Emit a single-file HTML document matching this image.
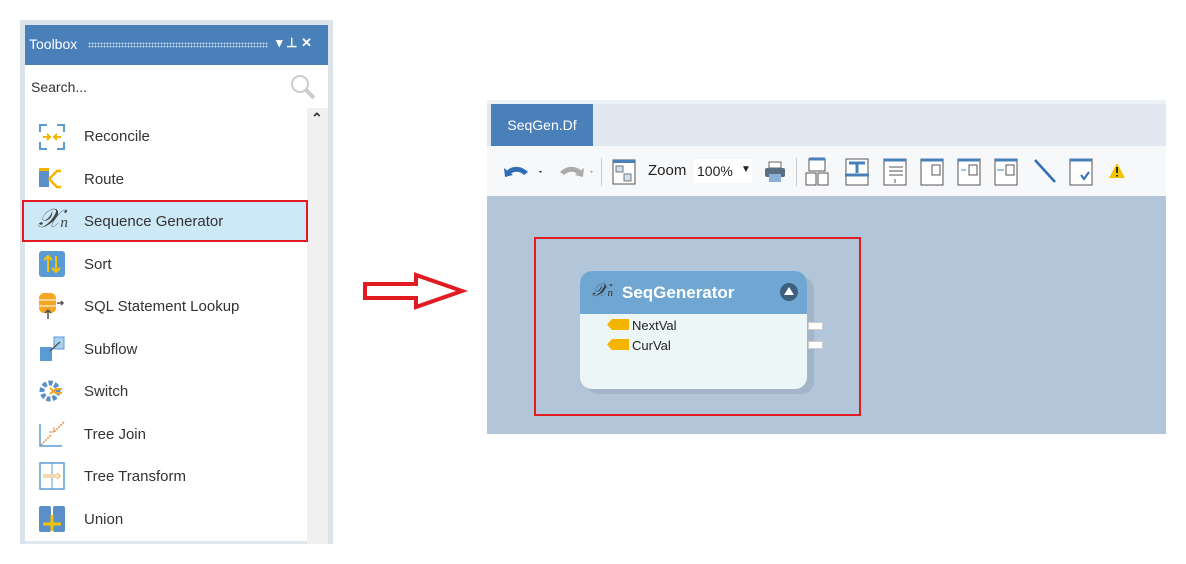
<!DOCTYPE html>
<html><head><meta charset="utf-8"><style>
body{margin:0;width:1186px;height:564px;background:#fff;position:relative;font-family:"Liberation Sans",sans-serif;overflow:hidden}
.a{position:absolute}
.item{position:absolute;left:84px;font-size:15px;color:#333}
.ic{position:absolute;left:38px;width:28px;height:28px}
</style></head><body>
<!-- toolbox -->
<div class="a" style="left:20px;top:20px;width:313px;height:524px;background:#dde3ea"></div>
<div class="a" style="left:25px;top:25px;width:303px;height:40px;background:#4a80ba"></div>
<div class="a" style="left:29px;top:36px;color:#fff;font-size:14px">Toolbox</div>
<div class="a" style="left:88px;top:42px;width:180px;height:6px;background-image:radial-gradient(#c5d6ea 0.8px,transparent 1px);background-size:3px 3px"></div>
<div class="a" style="left:276px;top:35px;color:#fff;font-size:13px;font-weight:bold">▾ ⊥ ✕</div>
<div class="a" style="left:25px;top:65px;width:303px;height:479px;background:#fff"></div>
<div class="a" style="left:31px;top:79px;font-size:14px;color:#333">Search...</div>
<svg class="a" style="left:288px;top:72px" width="30" height="30"><circle cx="12" cy="12" r="8" fill="none" stroke="#ccc" stroke-width="2"/><line x1="18" y1="18" x2="26" y2="26" stroke="#ccc" stroke-width="4"/></svg>
<div class="a" style="left:307px;top:108px;width:21px;height:436px;background:#f0f0f0"></div>
<div class="a" style="left:311px;top:110px;font-size:14px;color:#333;font-weight:bold">⌃</div>
<div class="a" style="left:22px;top:200px;width:282px;height:38px;background:#cde8f7;border:2px solid #e21b23"></div>
<div class="a" style="left:25px;top:541px;width:282px;height:3px;background:#dde8f1"></div>

<svg class="ic" style="top:123px" viewBox="0 0 28 28"><path d="M2 9V2h7M19 2h7v7M26 19v7h-7M9 26H2v-7" fill="none" stroke="#5b9bd5" stroke-width="2"/><path d="M5 14h7m-3-3l3 3-3 3M23 14h-7m3-3l-3 3 3 3" fill="none" stroke="#f5b400" stroke-width="2"/></svg>
<div class="item" style="top:128px">Reconcile</div>
<svg class="ic" style="top:165px" viewBox="0 0 28 28"><rect x="1" y="6" width="10" height="16" fill="#5b8fc9"/><rect x="1" y="3" width="10" height="3" fill="#f5b400"/><path d="M11 14l8-8h4M11 14l8 8h4" fill="none" stroke="#f5b400" stroke-width="2.5"/></svg>
<div class="item" style="top:171px">Route</div>
<div class="a" style="left:38px;top:204px;font-family:'Liberation Serif',serif;font-style:italic;font-size:26px;color:#444">𝒳<span style="font-size:15px">n</span></div>
<div class="item" style="top:213px">Sequence Generator</div>
<svg class="ic" style="top:250px" viewBox="0 0 28 28"><rect x="1" y="1" width="26" height="26" rx="3" fill="#5b9bd5"/><path d="M10 22V6m-4 4l4-4 4 4M18 6v16m-4-4l4 4 4-4" fill="none" stroke="#f5c400" stroke-width="2"/></svg>
<div class="item" style="top:256px">Sort</div>
<svg class="ic" style="top:292px" viewBox="0 0 28 28"><rect x="1" y="1" width="17" height="20" rx="5" fill="#f5a623"/><path d="M1 8h17M1 14h17" stroke="#fff"/><path d="M19 11h6m-2-2l2 2-2 2M10 27v-9m-3 3l3-3 3 3" fill="none" stroke="#555" stroke-width="1.5"/></svg>
<div class="item" style="top:298px">SQL Statement Lookup</div>
<svg class="ic" style="top:335px" viewBox="0 0 28 28"><rect x="2" y="12" width="12" height="14" fill="#5b9bd5"/><rect x="16" y="2" width="10" height="12" fill="#a9d1ef" stroke="#5b9bd5"/><path d="M12 16l10-9" stroke="#555" stroke-width="1.5"/></svg>
<div class="item" style="top:341px">Subflow</div>
<svg class="ic" style="top:377px" viewBox="0 0 28 28"><circle cx="12" cy="14" r="8" fill="none" stroke="#5b8fc9" stroke-width="5" stroke-dasharray="4 2"/><path d="M12 11l6 5h6M12 17l6-5h6" fill="none" stroke="#f5a623" stroke-width="2"/></svg>
<div class="item" style="top:383px">Switch</div>
<svg class="ic" style="top:420px" viewBox="0 0 28 28"><path d="M2 4v22h22" fill="none" stroke="#5b9bd5" stroke-width="1.5"/><path d="M26 2L16 12M3 25l10-10" stroke="#f08a3c" stroke-width="1.5" stroke-dasharray="2 1"/><path d="M16 12l-5 0m5 0l0-5" stroke="#f08a3c"/></svg>
<div class="item" style="top:426px">Tree Join</div>
<svg class="ic" style="top:462px" viewBox="0 0 28 28"><rect x="2" y="1" width="24" height="26" fill="none" stroke="#5b9bd5" stroke-width="1.5"/><path d="M14 1v26" stroke="#5b9bd5"/><rect x="5" y="12" width="14" height="4" fill="#f3d9b0"/><path d="M19 11l3 3-3 3" stroke="#f5a623" fill="none"/></svg>
<div class="item" style="top:468px">Tree Transform</div>
<svg class="ic" style="top:505px" viewBox="0 0 28 28"><rect x="1" y="1" width="12" height="26" rx="2" fill="#5b8fc9"/><rect x="15" y="1" width="12" height="26" rx="2" fill="#5b8fc9"/><path d="M14 10v16M5 19h18" stroke="#f5c400" stroke-width="3"/></svg>
<div class="item" style="top:511px">Union</div>

<!-- arrow -->
<svg class="a" style="left:360px;top:270px" width="110" height="42"><path d="M5 14H56V5L102 21 56 37V28H5Z" fill="#fff" stroke="#e21b23" stroke-width="4"/></svg>

<!-- designer -->
<div class="a" style="left:487px;top:100px;width:679px;height:334px;background:#f0f3f6"></div>
<div class="a" style="left:487px;top:104px;width:679px;height:42px;background:#e2e8ef"></div>
<div class="a" style="left:491px;top:104px;width:102px;height:42px;background:#4a80ba;color:#fff;font-size:14px;line-height:42px;text-align:center">SeqGen.Df</div>
<div class="a" style="left:487px;top:146px;width:679px;height:50px;background:#f6f8fa"></div>
<svg class="a" style="left:502px;top:160px" width="96" height="24">
<path d="M3 14C6 6 18 4 26 12L22 15 C17 10 10 11 7 16Z" fill="#2f6db5"/><path d="M2 8l1 9 8-2z" fill="#2f6db5"/>
<path d="M37 11l3 0-1.5 2z" fill="#222"/>
<path d="M81 14C78 6 66 4 58 12L62 15C67 10 74 11 77 16Z" fill="#aaa"/><path d="M82 8l-1 9-8-2z" fill="#aaa"/>
<path d="M88 11l3 0-1.5 2z" fill="#999"/>
</svg>
<div class="a" style="left:601px;top:158px;width:1px;height:28px;background:#ccc"></div>
<svg class="a" style="left:612px;top:159px" width="24" height="26"><rect x="1" y="1" width="22" height="24" fill="#fff" stroke="#555"/><rect x="1" y="1" width="22" height="3" fill="#4a80ba"/><rect x="4" y="7" width="7" height="6" fill="#cfe0ef" stroke="#777"/><rect x="12" y="15" width="7" height="7" fill="#cfe0ef" stroke="#777"/></svg>
<div class="a" style="left:648px;top:162px;font-size:15px;color:#222">Zoom</div>
<div class="a" style="left:694px;top:159px;width:58px;height:24px;background:#fff"></div>
<div class="a" style="left:697px;top:163px;font-size:14px;color:#222">100%</div>
<div class="a" style="left:741px;top:164px;font-size:10px;color:#222">▼</div>
<svg class="a" style="left:763px;top:160px" width="24" height="24"><rect x="6" y="2" width="12" height="6" fill="#fff" stroke="#666"/><rect x="2" y="8" width="20" height="9" rx="2" fill="#5a6f83"/><rect x="6" y="14" width="12" height="8" fill="#8ab0d6"/></svg>
<div class="a" style="left:796px;top:158px;width:1px;height:28px;background:#ccc"></div>
<svg class="a" style="left:805px;top:157px" width="330" height="30" fill="none" stroke="#555">
<rect x="4" y="2" width="16" height="12" fill="#fff"/><rect x="1" y="16" width="10" height="12" fill="#fff"/><rect x="13" y="16" width="10" height="12" fill="#fff"/><path d="M4 2h16" stroke="#4a80ba" stroke-width="3"/>
<rect x="41" y="2" width="22" height="26" fill="#fff"/><path d="M44 6h16M52 6v10M40 18h24" stroke="#4a80ba" stroke-width="3"/>
<rect x="79" y="2" width="22" height="26" fill="#fff"/><path d="M79 3h22" stroke="#4a80ba" stroke-width="3"/><path d="M84 10h14M84 14h14M84 18h14M90 22v4"/>
<rect x="116" y="2" width="22" height="26" fill="#fff"/><path d="M116 3h22" stroke="#4a80ba" stroke-width="3"/><rect x="127" y="8" width="8" height="10"/>
<rect x="153" y="2" width="22" height="26" fill="#fff"/><path d="M153 3h22" stroke="#4a80ba" stroke-width="3"/><rect x="164" y="8" width="8" height="10"/><path d="M156 13h5" stroke="#4a80ba"/>
<rect x="190" y="2" width="22" height="26" fill="#fff"/><path d="M190 3h22" stroke="#4a80ba" stroke-width="3"/><rect x="201" y="8" width="8" height="10"/><path d="M192 13h7" stroke="#4a80ba"/>
<path d="M230 3l20 22" stroke="#2f6db5" stroke-width="2.5"/>
<rect x="265" y="2" width="22" height="26" fill="#fff"/><path d="M265 3h22" stroke="#4a80ba" stroke-width="3"/><path d="M276 18l3 4 5-7" stroke="#2f6db5" stroke-width="2"/>
<path d="M312 6l8 15h-16z" fill="#f5c400" stroke="none"/><path d="M312 10v6M312 18v1.5" stroke="#222" stroke-width="1.8"/>
</svg>
<div class="a" style="left:487px;top:196px;width:679px;height:238px;background:#b3c5d8"></div>
<div class="a" style="left:534px;top:237px;width:323px;height:175px;border:2px solid #e21b23"></div>
<div class="a" style="left:586px;top:277px;width:228px;height:117px;background:#a3b5c8;border-radius:12px"></div>
<div class="a" style="left:580px;top:271px;width:227px;height:118px;background:#edf6f6;border-radius:12px;overflow:hidden">
<div style="height:43px;background:#6fa7d2"></div></div>
<div class="a" style="left:592px;top:280px;font-family:'Liberation Serif',serif;font-style:italic;font-size:18px;color:#333">𝒳<span style="font-size:11px">n</span></div>
<div class="a" style="left:622px;top:283px;font-size:17px;font-weight:bold;color:#fff">SeqGenerator</div>
<div class="a" style="left:780px;top:283px;width:18px;height:18px;border-radius:50%;background:#3e5f7d"></div>
<div class="a" style="left:784px;top:287px;width:0;height:0;border-left:5px solid transparent;border-right:5px solid transparent;border-bottom:8px solid #fff"></div>
<svg class="a" style="left:606px;top:318px" width="24" height="34"><path d="M6 1h17v11H6L1 6.5z" fill="#f5b400"/><path d="M6 21h17v11H6L1 26.5z" fill="#f5b400"/></svg>
<div class="a" style="left:632px;top:318px;font-size:13px;color:#222">NextVal</div>
<div class="a" style="left:632px;top:338px;font-size:13px;color:#222">CurVal</div>
<div class="a" style="left:808px;top:322px;width:13px;height:6px;background:#fff;border:1px solid #ccc"></div>
<div class="a" style="left:808px;top:341px;width:13px;height:6px;background:#fff;border:1px solid #ccc"></div>
</body></html>
